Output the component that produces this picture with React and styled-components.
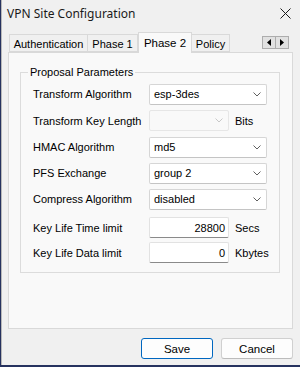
import React from 'react';
import styled, { createGlobalStyle } from 'styled-components';

const GlobalStyle = createGlobalStyle`
  html, body {
    margin: 0;
    padding: 0;
    background: #26325f;
  }
  body {
    width: 300px;
    height: 367px;
    overflow: hidden;
    font-family: "Liberation Sans", Arial, sans-serif;
    font-size: 11px;
    color: #000;
  }
`;

const Window = styled.div`
  margin-left: 1px;
  width: 299px;
  height: 365px;
  background: #f0f0f0;
  border-left: 1px solid #b8b8b8;
  box-sizing: border-box;
  display: flex;
  flex-direction: column;
`;

const TitleBar = styled.div`
  height: 26px;
  display: flex;
  align-items: center;
  justify-content: space-between;
  padding: 0 9px 0 5px;
  font-family: "Noto Sans", "Open Sans", sans-serif;
  font-size: 12px;
  color: #1a1a1a;
`;

const TabArea = styled.div`
  margin: 6px 7px 0 6px;
  display: flex;
  flex-direction: column;
`;

const TabStrip = styled.div`
  height: 20px;
  display: flex;
  align-items: flex-end;
  padding-left: 1px;
  position: relative;
  z-index: 1;
`;

const Tab = styled.div`
  width: ${p => p.$w}px;
  height: ${p => (p.$active ? 21 : 18)}px;
  margin-bottom: ${p => (p.$active ? -1 : 0)}px;
  display: flex;
  align-items: center;
  justify-content: center;
  box-sizing: border-box;
  border: 1px solid #d9d9d9;
  border-bottom: ${p => (p.$active ? 'none' : '1px solid #d9d9d9')};
  border-left: ${p => (p.$first || p.$active ? '1px solid #d9d9d9' : 'none')};
  background: ${p => (p.$active ? '#f9f9f9' : '#f0f0f0')};
  font-size: ${p => (p.$active ? 11.5 : 11)}px;
  padding-top: ${p => (p.$active ? 0 : 2)}px;
  white-space: nowrap;
`;

const Spacer = styled.div`
  flex: 1;
`;

const Scroller = styled.div`
  display: flex;
  align-self: flex-start;
  margin-top: 4px;
  margin-right: 4px;
  border: 1px solid #adadad;
`;

const ScrollButton = styled.div`
  width: 12px;
  height: 11px;
  display: flex;
  align-items: center;
  justify-content: center;
  background: #e1e1e1;
  border-left: ${p => (p.$second ? '1px solid #adadad' : 'none')};
`;

const Panel = styled.div`
  height: 277px;
  box-sizing: border-box;
  border: 1px solid #d9d9d9;
  background: #f9f9f9;
  padding: 13px 12px 0 11px;
`;

const Group = styled.fieldset`
  margin: 0;
  padding: 2px 0 7px 12px;
  border: 1px solid #dcdcdc;
  min-width: 0;
`;

const Legend = styled.legend`
  padding: 0 2px;
  margin-left: -5px;
  font-size: 11px;
  line-height: 13px;
`;

const Row = styled.div`
  display: flex;
  align-items: center;
  height: ${p => p.$h || 26}px;
  margin-top: ${p => p.$mt || 0}px;
`;

const Label = styled.div`
  width: 116px;
  flex: none;
  font-size: 11px;
  white-space: nowrap;
`;

const Select = styled.div`
  width: ${p => p.$w}px;
  height: 21px;
  box-sizing: border-box;
  display: flex;
  align-items: center;
  justify-content: space-between;
  padding: 0 5px 0 4px;
  background: ${p => (p.$disabled ? '#f9f9f9' : '#fff')};
  border: 1px solid ${p => (p.$disabled ? '#e6e6e6' : '#d6d6d6')};
  border-bottom-color: ${p => (p.$disabled ? '#e6e6e6' : '#c4c4c4')};
  border-radius: 2px;
  font-size: 11px;
`;

const Input = styled.div`
  width: 80px;
  height: 21px;
  box-sizing: border-box;
  display: flex;
  align-items: center;
  justify-content: flex-end;
  padding: 0 3px;
  background: #fff;
  border: 1px solid #e2e2e2;
  border-bottom: 1px solid #8a8a8a;
  border-radius: 2px;
  font-size: 11px;
`;

const Unit = styled.span`
  margin-left: 6px;
  font-size: 11px;
`;

const Footer = styled.div`
  display: flex;
  justify-content: flex-end;
  gap: 8px;
  padding: 9px 7px 0 0;
`;

const Button = styled.div`
  width: 72px;
  height: 21px;
  box-sizing: border-box;
  display: flex;
  align-items: center;
  justify-content: center;
  background: #fdfdfd;
  border: 1px solid ${p => (p.$primary ? '#0067c0' : '#d0d0d0')};
  border-bottom-color: ${p => (p.$primary ? '#0067c0' : '#bcbcbc')};
  border-radius: 3px;
  font-size: 11.5px;
`;

const Chevron = ({ color = '#606060' }) => (
  <svg width="8" height="5" viewBox="0 0 8 5">
    <polyline points="0.5,0.5 4,4 7.5,0.5" fill="none" stroke={color} strokeWidth="1" />
  </svg>
);

const Arrow = ({ dir }) => (
  <svg width="4" height="7" viewBox="0 0 4 7">
    {dir === 'left' ? <polygon points="4,0 4,7 0,3.5" fill="#000" /> : <polygon points="0,0 0,7 4,3.5" fill="#000" />}
  </svg>
);

const Close = () => (
  <svg width="11" height="11" viewBox="0 0 11 11">
    <path d="M0.5 0.5 L10.5 10.5 M10.5 0.5 L0.5 10.5" stroke="#1a1a1a" strokeWidth="1" />
  </svg>
);

export default function App() {
  return (
    <>
      <GlobalStyle />
      <Window>
        <TitleBar>
          <span>VPN Site Configuration</span>
          <Close />
        </TitleBar>
        <TabArea>
          <TabStrip>
            <Tab $first $w={79}>Authentication</Tab>
            <Tab $w={50}>Phase 1</Tab>
            <Tab $active $w={54}>Phase 2</Tab>
            <Tab $w={38}>Policy</Tab>
            <Spacer />
            <Scroller>
              <ScrollButton><Arrow dir="left" /></ScrollButton>
              <ScrollButton $second><Arrow dir="right" /></ScrollButton>
            </Scroller>
          </TabStrip>
          <Panel>
            <Group>
              <Legend>Proposal Parameters</Legend>
              <Row>
                <Label>Transform Algorithm</Label>
                <Select $w={118}>esp-3des<Chevron /></Select>
              </Row>
              <Row $h={27}>
                <Label>Transform Key Length</Label>
                <Select $w={80} $disabled><span /><Chevron color="#c8c8c8" /></Select>
                <Unit>Bits</Unit>
              </Row>
              <Row>
                <Label>HMAC Algorithm</Label>
                <Select $w={118}>md5<Chevron /></Select>
              </Row>
              <Row>
                <Label>PFS Exchange</Label>
                <Select $w={118}>group 2<Chevron /></Select>
              </Row>
              <Row>
                <Label>Compress Algorithm</Label>
                <Select $w={118}>disabled<Chevron /></Select>
              </Row>
              <Row $mt={3} $h={25}>
                <Label>Key Life Time limit</Label>
                <Input>28800</Input>
                <Unit>Secs</Unit>
              </Row>
              <Row $h={25}>
                <Label>Key Life Data limit</Label>
                <Input>0</Input>
                <Unit>Kbytes</Unit>
              </Row>
            </Group>
          </Panel>
        </TabArea>
        <Footer>
          <Button $primary>Save</Button>
          <Button>Cancel</Button>
        </Footer>
      </Window>
    </>
  );
}
